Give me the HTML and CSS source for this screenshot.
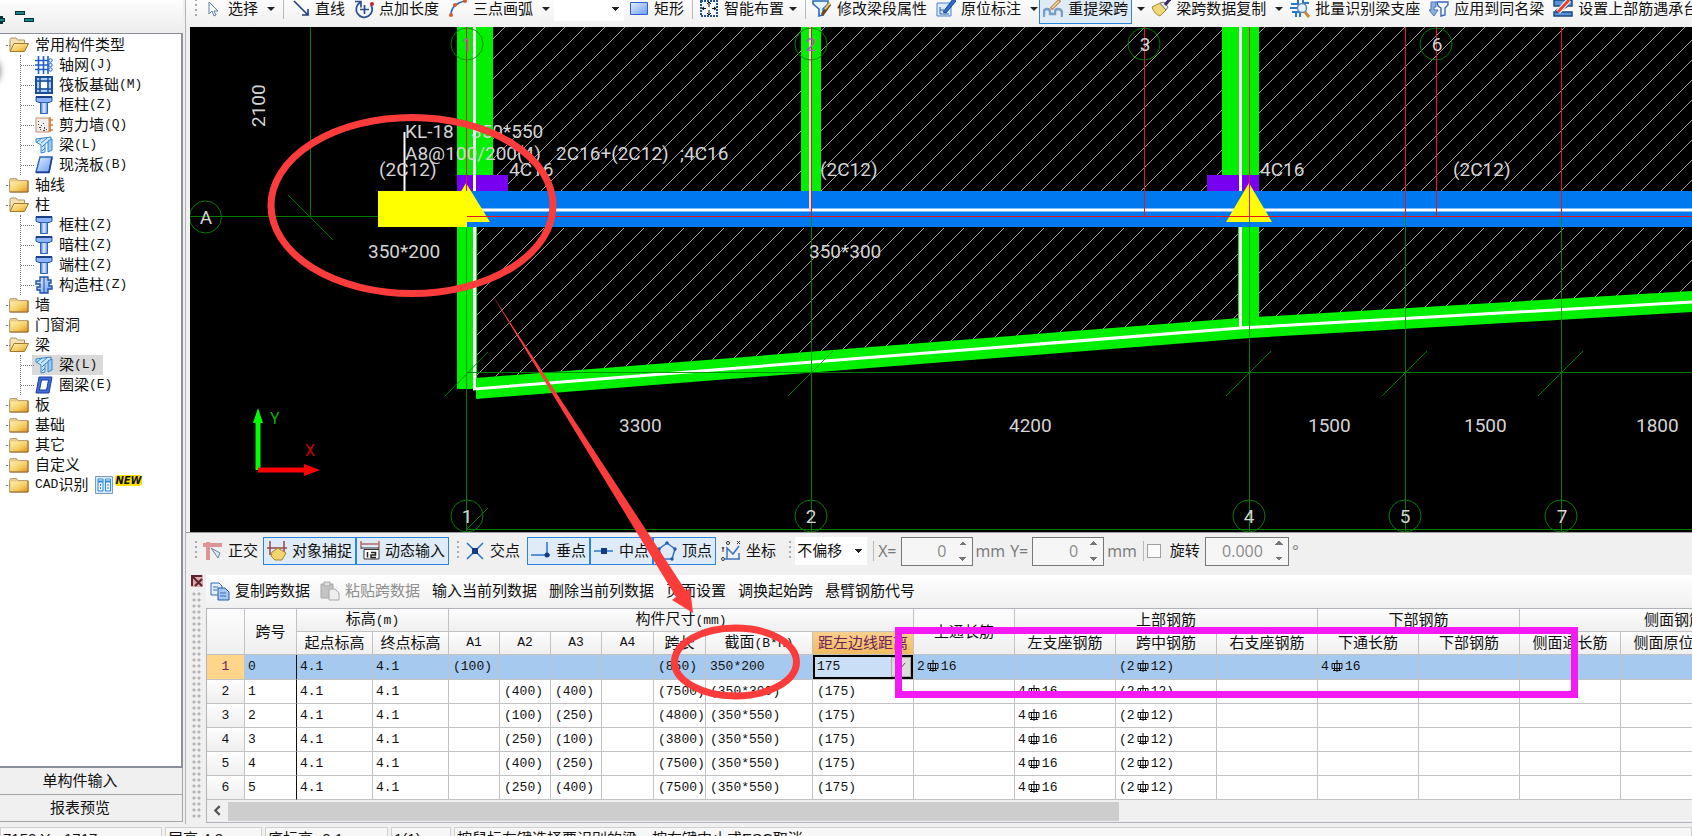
FILE: index.html
```html
<!DOCTYPE html>
<html lang="zh-CN">
<head>
<meta charset="utf-8">
<title>梁平法表格</title>
<link rel="stylesheet" href="styles.css">
</head>
<body>
<svg class="defs" aria-hidden="true">
  <defs>
    <linearGradient id="gFold" x1="0" y1="0" x2="1" y2="1"><stop offset="0" stop-color="#fff3b0"/><stop offset=".6" stop-color="#f3cb60"/><stop offset="1" stop-color="#e8901c"/></linearGradient>
    <linearGradient id="gBlue" x1="0" y1="0" x2="1" y2="1"><stop offset="0" stop-color="#e6f0ff"/><stop offset="1" stop-color="#6a9cf0"/></linearGradient>
    <linearGradient id="gCol" x1="0" y1="0" x2="1" y2="0"><stop offset="0" stop-color="#3a72d8"/><stop offset=".5" stop-color="#e8f1ff"/><stop offset="1" stop-color="#5588e0"/></linearGradient>
  </defs>
  <symbol id="folder" viewBox="0 0 20 16"><path d="M.5 3.500l1-2h6l1.500 2h10v11.500H.5z" fill="#e9c98a" stroke="#b9a070"/><path d="M1.500 4.500h17v10h-17z" fill="url(#gFold)"/><path d="M1 15h18V4" fill="none" stroke="#8a6420"/></symbol>
  <symbol id="folder-open" viewBox="0 0 20 16"><path d="M1 14V2.500l1-1.500h5l1.500 2h7V6" fill="#f5e2b0" stroke="#a89468"/><path d="M1 14.500L5 6.500h14.500l-4 8z" fill="url(#gFold)" stroke="#a07830"/></symbol>
  <symbol id="grid" viewBox="0 0 18 18"><path d="M3.500 0v18M8.500 0v18M13 0v18M0 4.500h15M0 9h15M0 13.500h15" stroke="#1f5fc8" stroke-width="1.600"/><g fill="#fff" stroke="#1f5fc8"><circle cx="15.500" cy="4.500" r="1.700"/><circle cx="15.500" cy="9" r="1.700"/><circle cx="15.500" cy="13.500" r="1.700"/></g></symbol>
  <symbol id="raft" viewBox="0 0 18 18"><path d="M1 1h16v16H1z" fill="#a9cdf2" stroke="#1b4d96" stroke-width="2"/><path d="M5 0v18M13 0v18M0 5h18M0 13h18" stroke="#1b4d96" stroke-width="1.500"/><path d="M6 6h6v6H6z" fill="#fff"/></symbol>
  <symbol id="column" viewBox="0 0 18 18"><path d="M1 .8h16v4.400l-3 1.300H4L1 5.200z" fill="#8db4f2" stroke="#1e4fae"/><path d="M1 1h16" stroke="#1d3f88" stroke-width="2"/><path d="M5.500 6.500h7v11h-7z" fill="url(#gCol)" stroke="#2a60c8"/></symbol>
  <symbol id="wall" viewBox="0 0 18 18"><path d="M1 2h13v14H1z" fill="#eee" stroke="#c98a68"/><path d="M3 5h1v1H3zM6 9h1v1H6zM4 11h2v1H4zM9 11h1v2H9zM5 13h1v1H5zM8 14h2v1H8zM11 13h1v1h-1zM3 8h1v1H3zM8 7h1v1H8z" fill="#444"/><path d="M15 1v15M14 4h4M14 9h4M14 14h4" stroke="#e07a30" stroke-width="1.600"/></symbol>
  <symbol id="beam" viewBox="0 0 18 18"><path d="M1 3L16 1v3l-6 4v8l-4 1V9L1 6z" fill="#cfe6ff" stroke="#2e86d0"/><path d="M13 5l4-2v11l-4 2z" fill="#9cc8f4" stroke="#2e86d0"/><path d="M2 6l5-4M6 7l6-5M7 11l3-3M7 15l3-3" stroke="#2e86d0"/></symbol>
  <symbol id="slab" viewBox="0 0 18 18"><path d="M5 1h12l-3 15H1z" fill="url(#gBlue)" stroke="#2b5fc0" stroke-width="1.400"/><path d="M1 16.500h13l3-15" fill="none" stroke="#1c3f98" stroke-width="1.500"/></symbol>
  <symbol id="ring" viewBox="0 0 18 18"><path d="M4 1h13l-3 16H1z" fill="#3c6fd6" stroke="#1c3f98"/><path d="M6.500 4h7l-2 10H4.500z" fill="#fff" stroke="#1c3f98"/></symbol>
  <symbol id="tie" viewBox="0 0 18 18"><path d="M5 1h8v3h3v3h-2v3h3v3h-4v4H5v-3H2v-3h3V8H1V5h4z" fill="url(#gBlue)" stroke="#1e4fae" stroke-width="1.400"/><path d="M9 1v16" stroke="#1e4fae"/></symbol>
  <symbol id="cad" viewBox="0 0 18 18"><path d="M.5.5h17v17H.5z" fill="#d8ecff" stroke="#7f9ab4"/><path d="M3 3h5v12H3zM10.500 3h5v12h-5z" fill="#eaf5ff" stroke="#2f8ae0"/><path d="M3 5.500h5M10.500 5.500h5" stroke="#2f8ae0" stroke-width="2"/><path d="M5.500 8v6M13 8v6" stroke="#2f8ae0" stroke-dasharray="2 1"/></symbol>
  <symbol id="rebar" viewBox="0 0 12 12"><path d="M1 3.500h10v5H1zM6 0v12M3.500 3.500v7M8.500 3.500v7M2 10.500h8" fill="none" stroke="#111"/></symbol>
</svg>

<div class="workspace">
  <aside class="sidebar">
    <div class="tree-tools">
      <svg width="36" height="20" viewBox="0 0 36 20" aria-label="展开 折叠"><path d="M0 11h5M1 7v8M15 4h10M24 11h10" stroke="#0a3234" stroke-width="4"/><path d="M0 11h4M16 4h8M25 11h8" stroke="#17868a" stroke-width="2"/></svg>
    </div>
    <nav class="tree">
      <div class="blob"></div>
      <ul>
        <li class="row open"><svg class="fi"><use href="#folder-open"/></svg>常用构件类型</li>
        <li><ul class="kids">
          <li class="row"><svg class="ci"><use href="#grid"/></svg>轴网<span class="key">(J)</span></li>
          <li class="row"><svg class="ci"><use href="#raft"/></svg>筏板基础<span class="key">(M)</span></li>
          <li class="row"><svg class="ci"><use href="#column"/></svg>框柱<span class="key">(Z)</span></li>
          <li class="row"><svg class="ci"><use href="#wall"/></svg>剪力墙<span class="key">(Q)</span></li>
          <li class="row"><svg class="ci"><use href="#beam"/></svg>梁<span class="key">(L)</span></li>
          <li class="row"><svg class="ci"><use href="#slab"/></svg>现浇板<span class="key">(B)</span></li>
        </ul></li>
        <li class="row"><svg class="fi"><use href="#folder"/></svg>轴线</li>
        <li class="row open"><svg class="fi"><use href="#folder-open"/></svg>柱</li>
        <li><ul class="kids">
          <li class="row"><svg class="ci"><use href="#column"/></svg>框柱<span class="key">(Z)</span></li>
          <li class="row"><svg class="ci"><use href="#column"/></svg>暗柱<span class="key">(Z)</span></li>
          <li class="row"><svg class="ci"><use href="#column"/></svg>端柱<span class="key">(Z)</span></li>
          <li class="row"><svg class="ci"><use href="#tie"/></svg>构造柱<span class="key">(Z)</span></li>
        </ul></li>
        <li class="row"><svg class="fi"><use href="#folder"/></svg>墙</li>
        <li class="row"><svg class="fi"><use href="#folder"/></svg>门窗洞</li>
        <li class="row open"><svg class="fi"><use href="#folder-open"/></svg>梁</li>
        <li><ul class="kids">
          <li class="row"><span class="picked"><svg class="ci"><use href="#beam"/></svg>梁<span class="key">(L)</span></span></li>
          <li class="row"><svg class="ci"><use href="#ring"/></svg>圈梁<span class="key">(E)</span></li>
        </ul></li>
        <li class="row"><svg class="fi"><use href="#folder"/></svg>板</li>
        <li class="row"><svg class="fi"><use href="#folder"/></svg>基础</li>
        <li class="row"><svg class="fi"><use href="#folder"/></svg>其它</li>
        <li class="row"><svg class="fi"><use href="#folder"/></svg>自定义</li>
        <li class="row"><svg class="fi"><use href="#folder"/></svg><span class="key">CAD</span>识别<svg class="ci cadi"><use href="#cad"/></svg><b class="new">NEW</b></li>
      </ul>
    </nav>
    <button class="side-btn">单构件输入</button>
    <button class="side-btn">报表预览</button>
  </aside>

  <main class="main">
    <div class="bar top-bar">
      <i class="grip"></i>
      <button class="tool"><svg viewBox="0 0 20 20"><path d="M6 3v12l3-3 2 5 2-1-2-4h4z" fill="#fff" stroke="#5c7fa8"/></svg>选择</button><i class="caret"></i>
      <i class="sep"></i>
      <button class="tool"><svg viewBox="0 0 20 20"><path d="M4 2L18 16M18 10v6h-6" fill="none" stroke="#1f3f80" stroke-width="1.600"/></svg>直线</button>
      <button class="tool"><svg viewBox="0 0 20 20"><path d="M6 3.500a8 8 0 1 0 11 2.500M10.500 6v9M6 10.500h9M1 2.500h6v6" fill="none" stroke="#28508c" stroke-width="1.700"/><circle cx="18" cy="5" r="2" fill="#c23"/></svg>点加长度</button>
      <button class="tool"><svg viewBox="0 0 20 20"><path d="M3 16Q3 5 17 2" fill="none" stroke="#2f62b0" stroke-width="1.600"/><g fill="#e0582c"><circle cx="3" cy="16" r="2"/><circle cx="7" cy="6" r="2"/><circle cx="17" cy="2" r="2"/></g></svg>三点画弧</button><i class="caret"></i>
      <select class="blank" aria-label="画弧方式"><option></option></select>
      <button class="tool"><svg viewBox="0 0 20 20"><path d="M1.500 3.500h17v12h-17z" fill="url(#gBlue)" stroke="#2c5fd0"/></svg>矩形</button>
      <i class="sep"></i>
      <button class="tool"><svg viewBox="0 0 20 20"><path d="M2 2h16v15H2z" fill="#f3f8ff" stroke="#24508a" stroke-dasharray="2 1" stroke-width="2"/><path d="M10 3v5M8 5l2-2 2 2M10 16v-5M8 14l2 2 2-2M3 9.500h4M5 8L3 9.500 5 11M17 9.500h-4M15 8l2 1.500-2 1.500" stroke="#111" fill="none"/></svg>智能布置</button><i class="caret tight"></i>
      <i class="sep"></i>
      <button class="tool"><svg viewBox="0 0 20 20"><path d="M1 2h15v3l-5 5v6l-4 1v-7L1 5z" fill="#e8f3ff" stroke="#2868c0" stroke-width="1.600"/><path d="M10 16L18 5" stroke="#6a4a18" stroke-width="3"/><path d="M13 10l5-6" stroke="#e8c060" stroke-width="2"/></svg>修改梁段属性</button>
      <button class="tool"><svg viewBox="0 0 20 20"><path d="M1 4h14v13H1z" fill="#dcebfb" stroke="#4a80c8"/><path d="M4 15V8M4 15h9M4 11h4" stroke="#2d62b0"/><path d="M7 13L17 0l3 2L10 14z" fill="#2c6ccc" stroke="#174a98"/></svg>原位标注</button><i class="caret"></i>
      <button class="tool on"><svg viewBox="0 0 20 20"><path d="M1 18v-5q0-3 3-3t3 3v2h5v-2q0-3 3-3t4 3v5" fill="none" stroke="#7c9cc8" stroke-width="2.400"/><path d="M8 10L17 1" stroke="#b98a50" stroke-width="3.500"/><path d="M9 9l7-7" stroke="#f2d8a0" stroke-width="1.500"/></svg>重提梁跨</button><i class="caret tight"></i>
      <button class="tool"><svg viewBox="0 0 20 20"><path d="M1 8l8-4 6 7-6 6q-6-2-8-9z" fill="#f0d878" stroke="#a88a30"/><path d="M9 4l6 7 2-3-4-5z" fill="#eee" stroke="#777"/><path d="M14 6l5-6" stroke="#3a2a6a" stroke-width="3"/></svg>梁跨数据复制</button><i class="caret"></i>
      <button class="tool"><svg viewBox="0 0 20 20"><path d="M1 5h8M0 9h7M2 13h8M8 1v5M13 1v4M6 12v6M10 14v4M14 4h5" stroke="#2a78c8" stroke-width="2"/><circle cx="12" cy="9" r="4.500" fill="#e6f2ff" stroke="#5a88b8" stroke-width="1.500"/><path d="M15 13l4 5" stroke="#d08a28" stroke-width="3"/></svg>批量识别梁支座</button>
      <button class="tool"><svg viewBox="0 0 20 20"><path d="M8 3h11v3l-3 3v7l-4 1V9L9 7z" fill="#f2f8ff" stroke="#3a68b8" stroke-width="1.400"/><path d="M2 3h5v5H5v3h4l-4 6-5-6h2z" fill="#8cb0e8" stroke="#4a70b8"/></svg>应用到同名梁</button>
      <button class="tool"><svg viewBox="0 0 20 20"><path d="M1 1h18v6H1zM1 13h18v4H1z" fill="#5a94d4" stroke="#174a88" stroke-width="1.500"/><path d="M3 13L14 6" stroke="#174a88" stroke-width="4"/><path d="M5 13L16 1" stroke="#fff" stroke-width="5"/><path d="M5 13L16 1" stroke="#e8442c" stroke-width="3"/></svg>设置上部筋遇承台</button>
    </div>

    <section class="canvas">
      <svg viewBox="190 27 1502 505" preserveAspectRatio="xMinYMin slice" aria-label="梁平面图">
        <defs><pattern id="hatch" width="20" height="20" patternUnits="userSpaceOnUse"><path d="M-1 13L13-1M11 21L21 11" stroke="#a0a0a0"/></pattern></defs>
        <path d="M493 27H1692V191H493zM477 228H1692V292L1260 317 477 378z" fill="url(#hatch)"/>
        <g fill="#00f000">
          <path d="M457 27h36v164h-36zM457 227h20v162h-20zM801 27h20v164h-20zM1222 27h37v164h-37zM1238 227h21v100h-21z"/>
          <path d="M476 378L1240 318 1692 291v21L1250 338 476 399z"/>
        </g>
        <path d="M457 175h51v16h-51zM1207 175h52v16h-52z" fill="#7800f0"/>
        <path d="M474.500 27V389L1240.500 328 1692 302M1240.500 27V328" fill="none" stroke="#fff" stroke-width="3"/>
        <path d="M467 191H1692v36H467z" fill="#0078f0"/>
        <path d="M480 210H1692" stroke="#fff" stroke-width="3"/>
        <path d="M810 27V210" stroke="#ddd" stroke-width="2"/>
        <path d="M378 191H467v36H378zM466 183l24 39h-47zM1249 183l23 39h-46z" fill="#ff0"/>
        <path d="M404.500 132V191" stroke="#fff" stroke-width="2"/>
        <g fill="none" stroke="#080" stroke-width="1" opacity=".9">
          <path d="M310.500 27V216.500M190 216.500H378M288 195l45 45M466.500 228V531M811.500 216V531M1249.500 216V531M1405.500 216V531M1561.500 216V531M467 372.500H1692M467 529.500H1692M445 396l43-44M788 396l45-45M1226 396l45-45M1382 396l45-45M1538 396l45-45M467 529l21-21"/>
          <circle cx="205.500" cy="217" r="16"/><circle cx="467" cy="44" r="16"/><circle cx="811" cy="44" r="16"/><circle cx="1144" cy="44" r="16"/><circle cx="1436" cy="44" r="16"/>
          <circle cx="467" cy="516" r="16"/><circle cx="811" cy="516" r="16"/><circle cx="1249" cy="516" r="16"/><circle cx="1405" cy="516" r="16"/><circle cx="1561" cy="516" r="16"/>
        </g>
        <path d="M466.500 27V191M467 216.500H1692M811.500 27V216M1144.500 27V216M1249.500 27V216M1405.500 27V216M1436.500 27V216M1561.500 27V216" stroke="#e8141c" stroke-width="1"/>
        <g class="cad-text">
          <text x="368" y="258">350*200</text><text x="809" y="258">350*300</text>
          <text x="379" y="176">(2C12)</text><text x="509" y="176">4C16</text><text x="820" y="176">(2C12)</text>
          <text x="1260" y="176">4C16</text><text x="1453" y="176">(2C12)</text>
          <text x="405" y="138">KL-18</text><text x="471" y="138">350*550</text>
          <text x="405" y="160">A8@100/200(4)</text><text x="556" y="160">2C16+(2C12)</text><text x="680" y="160">;4C16</text>
          <text x="619" y="432">3300</text><text x="1009" y="432">4200</text><text x="1308" y="432">1500</text><text x="1464" y="432">1500</text><text x="1636" y="432">1800</text>
          <text transform="translate(265 127) rotate(-90)">2100</text>
          <g text-anchor="middle">
            <text x="206" y="224">A</text><text x="467" y="51" fill="#b060b0">1</text><text x="811" y="51" fill="#b060b0">2</text><text x="1145" y="51">3</text><text x="1437" y="51">6</text>
            <text x="467" y="523">1</text><text x="811" y="523">2</text><text x="1249" y="523">4</text><text x="1405" y="523">5</text><text x="1562" y="523">7</text>
          </g>
        </g>
        <path d="M258 470V421" stroke="#0f0" stroke-width="5"/><path d="M258 408l5 15h-10z" fill="#0f0"/>
        <path d="M258 470H306" stroke="#f00" stroke-width="5"/><path d="M320 470l-16-6v12z" fill="#f00"/>
        <text class="axis" x="270" y="424" fill="#00b000">Y</text><text class="axis" x="305" y="456" fill="#c00000">X</text>
      </svg>
    </section>

    <div class="bar snap-bar">
      <i class="grip"></i>
      <button class="tool"><svg viewBox="0 0 20 20"><path d="M0 4h19M5 1v18" stroke="#dc9494" stroke-width="4"/><path d="M8 7l9 5-2 5z" fill="#dde8f2" stroke="#6c8098"/></svg>正交</button>
      <div class="group">
        <button class="tool on"><svg viewBox="0 0 20 20"><path d="M3 0v14M17 0v14M0 7h20" stroke="#984848" stroke-width="1.500"/><path d="M5 11l6-4 8 5-4 7H8l-4-4z" fill="#f2d470" stroke="#a88430"/></svg>对象捕捉</button><button class="tool on"><svg viewBox="0 0 20 20"><path d="M1 0v8M19 0v8M1 3h18" stroke="#b46c6c" stroke-width="1.500"/><path d="M1 7h18M4 8.500h15V18H4z" fill="#fff" stroke="#333"/><path d="M7.500 11v5.500M11 11.500h4.500v2.500H11v2.500h5" fill="none" stroke="#222" stroke-width="1.500"/></svg>动态输入</button>
      </div>
      <i class="grip"></i>
      <button class="tool"><svg viewBox="0 0 20 20"><path d="M2 2l16 16M18 2L2 18" stroke="#2f74c8" stroke-width="1.600"/><path d="M7 7h6v6H7z" fill="#123c88"/></svg>交点</button>
      <div class="group second">
        <button class="tool on"><svg viewBox="0 0 20 20"><path d="M0 14h19M16 1v15" stroke="#2f74c8" stroke-width="1.500"/><circle cx="16" cy="14" r="2.500" fill="#123c88"/></svg>垂点</button><button class="tool on"><svg viewBox="0 0 20 20"><path d="M0 10h19" stroke="#2f74c8" stroke-width="1.500"/><path d="M7 7h6v6H7z" fill="#123c88"/></svg>中点</button><button class="tool on"><svg viewBox="0 0 20 20"><path d="M10 2l8 6-3 10H5L2 8z" fill="none" stroke="#2f74c8" stroke-width="1.500"/><g fill="#2458b0"><circle cx="10" cy="2" r="1.700"/><circle cx="18" cy="8" r="1.700"/><circle cx="15" cy="18" r="1.700"/><circle cx="5" cy="18" r="1.700"/><circle cx="2" cy="8" r="1.700"/></g></svg>顶点</button>
      </div>
      <button class="tool coord"><svg viewBox="0 0 20 20"><path d="M6 18V7l6 6 6-8M4 18h15M18 12v6" fill="none" stroke="#3c74c0" stroke-width="1.500"/><path d="M1 6l1 2 1-2M2 8v3" stroke="#333" fill="none"/><circle cx="7" cy="2" r="1.500" fill="none" stroke="#333"/><circle cx="2" cy="18" r="1.500" fill="none" stroke="#333"/><path d="M16 0l3 3M19 0l-3 3" stroke="#333"/></svg>坐标</button>
      <i class="grip"></i>
      <select class="offset" aria-label="偏移方式"><option>不偏移</option></select>
      <i class="sep"></i>
      <label class="unit" for="dx">X=</label><span class="spin"><input id="dx" value="0" disabled><i></i></span><span class="unit">mm</span>
      <label class="unit y" for="dy">Y=</label><span class="spin"><input id="dy" value="0" disabled><i></i></span><span class="unit">mm</span>
      <i class="sep"></i>
      <label class="rot"><input type="checkbox">旋转</label><span class="spin wide"><input aria-label="旋转角度" value="0.000" disabled><i></i></span><span class="unit deg">°</span>
    </div>

    <section class="pane">
      <div class="pane-grip"><button class="close" aria-label="关闭"><svg viewBox="0 0 12 12"><path d="M1 11V1h10M1 1l10 10M11 4L4 11" fill="none" stroke="#5a2430" stroke-width="2"/></svg></button></div>
      <div class="pane-body">
        <div class="pane-bar">
          <button class="tool"><svg viewBox="0 0 20 20"><path d="M1 2h8l3 3v9H1z" fill="#e4f0ff" stroke="#3468b8"/><path d="M8 7h7l4 4v8H8z" fill="#a8c8f4" stroke="#2458a8"/><path d="M3 6h5M3 9h4M10 12h6M10 15h6" stroke="#3468b8"/></svg>复制跨数据</button>
          <button class="tool" disabled><svg viewBox="0 0 20 20"><path d="M1 3h12v14H1z" fill="#c4c4c4" stroke="#a8a8a8"/><path d="M4 1h6v4H4z" fill="#ddd" stroke="#aaa"/><path d="M9 8h6l4 4v7H9z" fill="#eee" stroke="#a8a8a8"/></svg>粘贴跨数据</button>
          <button>输入当前列数据</button>
          <button>删除当前列数据</button>
          <button>页面设置</button>
          <button>调换起始跨</button>
          <button>悬臂钢筋代号</button>
        </div>
        <div class="sheet">
          <table>
            <colgroup><col class="w38"><col class="w52"><col class="w76"><col class="w76"><col class="w51"><col class="w51"><col class="w51"><col class="w52"><col class="w52"><col class="w107"><col class="w101"><col class="w101"><col class="w101"><col class="w101"><col class="w101"><col class="w101"><col class="w101"><col class="w101"><col class="w101"><col class="w107"></colgroup>
            <thead>
              <tr><th rowspan="2"></th><th rowspan="2">跨号</th><th colspan="2">标高<span class="key">(m)</span></th><th colspan="7">构件尺寸<span class="key">(mm)</span></th><th rowspan="2">上通长筋</th><th colspan="3">上部钢筋</th><th colspan="2">下部钢筋</th><th colspan="3">侧面钢筋</th></tr>
              <tr><th>起点标高</th><th>终点标高</th><th class="key">A1</th><th class="key">A2</th><th class="key">A3</th><th class="key">A4</th><th>跨长</th><th>截面<span class="key">(B*H)</span></th><th class="hot">距左边线距离</th><th>左支座钢筋</th><th>跨中钢筋</th><th>右支座钢筋</th><th>下通长筋</th><th>下部钢筋</th><th>侧面通长筋</th><th>侧面原位标</th><th>拉筋</th></tr>
            </thead>
            <tbody>
              <tr class="sel"><th>1</th><td>0</td><td>4.1</td><td>4.1</td><td>(100)</td><td></td><td></td><td></td><td>(850)</td><td>350*200</td><td class="edit"><div class="editor"><input value="175" aria-label="距左边线距离"><button aria-label="展开"><svg viewBox="0 0 10 10"><path d="M1 5l3 3 5-6" fill="none" stroke="#555"/></svg></button></div></td><td>2<svg class="rb"><use href="#rebar"/></svg>16</td><td></td><td>(2<svg class="rb"><use href="#rebar"/></svg>12)</td><td></td><td>4<svg class="rb"><use href="#rebar"/></svg>16</td><td></td><td></td><td></td><td></td></tr>
              <tr><th>2</th><td>1</td><td>4.1</td><td>4.1</td><td></td><td>(400)</td><td>(400)</td><td></td><td>(7500)</td><td>(350*300)</td><td>(175)</td><td></td><td>4<svg class="rb"><use href="#rebar"/></svg>16</td><td>(2<svg class="rb"><use href="#rebar"/></svg>12)</td><td></td><td></td><td></td><td></td><td></td><td></td></tr>
              <tr><th>3</th><td>2</td><td>4.1</td><td>4.1</td><td></td><td>(100)</td><td>(250)</td><td></td><td>(4800)</td><td>(350*550)</td><td>(175)</td><td></td><td>4<svg class="rb"><use href="#rebar"/></svg>16</td><td>(2<svg class="rb"><use href="#rebar"/></svg>12)</td><td></td><td></td><td></td><td></td><td></td><td></td></tr>
              <tr><th>4</th><td>3</td><td>4.1</td><td>4.1</td><td></td><td>(250)</td><td>(100)</td><td></td><td>(3800)</td><td>(350*550)</td><td>(175)</td><td></td><td>4<svg class="rb"><use href="#rebar"/></svg>16</td><td>(2<svg class="rb"><use href="#rebar"/></svg>12)</td><td></td><td></td><td></td><td></td><td></td><td></td></tr>
              <tr><th>5</th><td>4</td><td>4.1</td><td>4.1</td><td></td><td>(400)</td><td>(250)</td><td></td><td>(7500)</td><td>(350*550)</td><td>(175)</td><td></td><td>4<svg class="rb"><use href="#rebar"/></svg>16</td><td>(2<svg class="rb"><use href="#rebar"/></svg>12)</td><td></td><td></td><td></td><td></td><td></td><td></td></tr>
              <tr><th>6</th><td>5</td><td>4.1</td><td>4.1</td><td></td><td>(250)</td><td>(400)</td><td></td><td>(7500)</td><td>(350*550)</td><td>(175)</td><td></td><td>4<svg class="rb"><use href="#rebar"/></svg>16</td><td>(2<svg class="rb"><use href="#rebar"/></svg>12)</td><td></td><td></td><td></td><td></td><td></td><td></td></tr>
            </tbody>
          </table>
          <div class="hscroll"><button aria-label="向左滚动"><svg viewBox="0 0 10 10"><path d="M7 1L3 5l4 4" fill="none" stroke="#555" stroke-width="2"/></svg></button><i class="thumb"></i></div>
        </div>
      </div>
    </section>
  </main>
</div>

<footer class="status">
  <span class="s1">7150 Y=-1717</span><span class="s2">层高:4.2</span><span class="s3">底标高:-0.1</span><span class="s4">1(1)</span><span class="s5">按鼠标左键选择要识别的梁，按右键中止或ESC取消</span>
</footer>

<svg class="markup" viewBox="0 0 1692 836" preserveAspectRatio="xMinYMin slice" aria-hidden="true">
  <g fill="none" stroke="#fc3b3b" stroke-width="7"><ellipse cx="412" cy="205.500" rx="141" ry="88"/><ellipse cx="735.500" cy="662" rx="61" ry="34"/></g>
  <path d="M491 293L686 591 690 588 693 613 672 600 676 597z" fill="#fc3b3b"/>
  <path d="M898.500 630.500H1574.500V694.500H898.500z" fill="none" stroke="#f41af4" stroke-width="7"/>
</svg>
</body>
</html>
```
FILE: styles.css
```css
* { box-sizing: border-box; }
body {
  margin: 0;
  height: 100vh;
  display: flex;
  flex-direction: column;
  overflow: hidden;
  position: relative;
  background: #f0f0f0;
  color: #111;
  font: 15px/20px "Liberation Sans", "Noto Sans CJK SC", sans-serif;
}
.defs { position: absolute; width: 0; height: 0; }
button {
  border: 0;
  padding: 0;
  background: none;
  color: inherit;
  font: inherit;
  white-space: nowrap;
}
.key { font-family: "Liberation Mono", "Noto Sans CJK SC", monospace; font-size: 13px; }

.workspace { flex: 1; min-height: 0; display: flex; }

/* component tree */
.sidebar {
  flex: none;
  width: 183px;
  display: flex;
  flex-direction: column;
  padding-bottom: 2px;
}
.tree-tools {
  height: 33px;
  padding-top: 9px;
  background: linear-gradient(#fdfdfd, #ececec);
}
.tree-tools svg { display: block; }
.tree {
  flex: 1;
  min-height: 0;
  position: relative;
  overflow: hidden;
  padding-top: 1px;
  background: #fff;
  border: solid #8a8f99;
  border-width: 1px 2px 2px 0;
}
.blob {
  position: absolute;
  left: -34px;
  top: 20px;
  width: 34px;
  height: 34px;
  border-radius: 50%;
  box-shadow: 0 0 6px #777;
}
.tree ul { list-style: none; margin: 0; padding: 0; }
.row { display: flex; align-items: center; height: 20px; padding-left: 9px; position: relative; }
.row::before {
  content: "";
  position: absolute;
  left: 6px;
  top: 10px;
  width: 4px;
  border-top: 1px dotted #777;
}
.tree .kids { margin-left: 20px; border-left: 1px dotted #777; }
.kids .row { padding-left: 14px; }
.kids .row::before { left: 0; width: 13px; }
.fi { width: 20px; height: 16px; margin-right: 6px; }
.ci { width: 18px; height: 18px; margin-right: 6px; }
.cadi { margin: 0 2px 0 7px; }
.new {
  align-self: flex-start;
  background: #fbe000;
  border-radius: 3px;
  font: bold italic 10px/11px "DejaVu Sans", sans-serif;
}
.picked { display: flex; align-items: center; height: 20px; margin-left: -3px; padding: 0 6px 0 3px; background: #d9d9d9; }
.side-btn {
  height: 27px;
  padding-right: 22px;
  background: #f0f0f0;
  border: solid #a5a5a5;
  border-width: 0 1px 1px 0;
  color: #111;
}

/* toolbars */
.main {
  flex: 1;
  min-width: 0;
  display: flex;
  flex-direction: column;
  border-left: 1px solid #b4b4b4;
  margin-left: 2px;
}
.bar { flex: none; display: flex; align-items: center; overflow: hidden; padding-left: 9px; }
.top-bar { height: 27px; padding-bottom: 9px; background: linear-gradient(#fcfcfc, #f0f0f0); }
.bar > * { flex: none; }
.grip { width: 2px; height: 20px; background: repeating-linear-gradient(#aaa 0 2px, transparent 2px 5px); }
.tool { display: flex; align-items: center; gap: 5px; margin-left: 9px; }
.tool svg { width: 20px; height: 20px; flex: none; }
.grip + .tool, .sep + .tool { margin-left: 6px; }
.caret {
  margin-left: 9px;
  border: solid transparent;
  border-width: 4px 4px 0;
  border-top-color: #222;
}
.caret.tight { margin-left: 5px; }
.caret + .tool { margin-left: 7px; }
.sep { width: 1px; height: 20px; margin-left: 8px; background: #b8b8b8; }
.tool.on { height: 28px; padding: 0 3px; background: #dfebf6; border: 1px solid #2a86dc; }
.top-bar .caret + .on { margin-left: 1px; height: 30px; }
.top-bar .on + .caret + .tool { margin-left: 6px; }
select {
  appearance: none;
  border: 0;
  border-radius: 0;
  color: #111;
  font: inherit;
  background:
    linear-gradient(to bottom left, #222 50%, transparent 50%) right 8px center / 4px 4px no-repeat,
    linear-gradient(to bottom right, #222 50%, transparent 50%) right 4px center / 4px 4px no-repeat,
    #fff;
}
.blank { width: 70px; height: 24px; margin-left: 4px; }
.blank + .tool { margin-left: 5px; }

/* drawing */
.canvas { flex: 1; min-height: 0; margin-left: 4px; background: #000; overflow: hidden; }
.canvas svg { display: block; width: 100%; height: 100%; }
.cad-text { font: 19px Roboto, sans-serif; fill: #d4d4d4; }
.axis { font: 16px Roboto, sans-serif; }

/* snap bar */
.snap-bar { height: 43px; padding-bottom: 6px; border-top: 1px solid #999; }
.group { display: flex; margin-left: 5px; }
.group.second { margin-left: 7px; }
.group .tool { margin-left: 0; }
.group + .grip { margin-left: 8px; }
.coord { margin-left: 5px; }
.coord + .grip { margin-left: 13px; }
.offset { width: 72px; height: 28px; margin-left: 4px; padding: 0 2px; }
.snap-bar .sep { margin-left: 6px; }
.unit { margin: 0 4px; color: #777; font: 16px/20px "Open Sans", sans-serif; }
.spin + .unit { margin: 0 0 0 3px; }
.unit.y { margin-left: 5px; }
.spin {
  display: flex;
  align-items: center;
  width: 72px;
  height: 29px;
  padding-right: 5px;
  background: #f6f6f6;
  border: 1px solid #777;
}
.spin.wide { width: 84px; margin-left: 5px; }
.spin input {
  flex: 1;
  min-width: 0;
  border: 0;
  padding: 0 12px 0 0;
  background: none;
  color: #8a8a8a;
  text-align: right;
  font: 16px/20px "Open Sans", sans-serif;
}
.spin i {
  width: 8px;
  height: 20px;
  background:
    linear-gradient(to bottom left, #777 50%, transparent 50%) left bottom / 4px 4px no-repeat,
    linear-gradient(to bottom right, #777 50%, transparent 50%) right bottom / 4px 4px no-repeat,
    linear-gradient(to top left, #777 50%, transparent 50%) left top / 4px 4px no-repeat,
    linear-gradient(to top right, #777 50%, transparent 50%) right top / 4px 4px no-repeat;
}
.rot { display: flex; align-items: center; gap: 9px; margin-left: 3px; }
.rot input { appearance: none; width: 14px; height: 14px; margin: 0; border: 1px solid #a0a0a0; background: #fafafa; }
.deg { color: #888; }

/* beam table pane */
.pane { flex: none; display: flex; min-width: 0; height: 249px; }
.pane-grip {
  flex: none;
  width: 20px;
  padding-left: 5px;
}
.pane-grip::after {
  content: "";
  display: block;
  width: 10px;
  height: 228px;
  margin: 5px 0 0 1px;
  background: radial-gradient(circle at 2px 2px, #b4b4b4 1px, transparent 2px) 0 0 / 5px 6px;
}
.close { display: block; width: 12px; height: 12px; background: #dfaaaa; }
.close svg { display: block; }
.pane-body { flex: 1; min-width: 0; }
.pane-bar {
  display: flex;
  align-items: center;
  gap: 12px;
  height: 33px;
  padding: 0 0 2px 4px;
  background: linear-gradient(#fff, #f0f0f0);
}
.pane-bar > * { flex: none; }
.pane-bar .tool { margin-left: 0; }
.pane-bar .tool + .tool { margin-left: -2px; }
.pane-bar button:disabled { color: #8e8e8e; }
.sheet { overflow: hidden; border: 1px solid #b0b4ba; border-width: 1px 0 1px 1px; background: #f0f0f0; }
table { width: 1622px; table-layout: fixed; border-collapse: separate; border-spacing: 0; background: #fff; }
.w38 { width: 38px; } .w51 { width: 51px; } .w52 { width: 52px; } .w76 { width: 76px; }
.w101 { width: 101px; } .w107 { width: 107px; }
th, td { padding: 0; height: 24px; border: solid #c2c2c2; border-width: 0 1px 1px 0; white-space: nowrap; overflow: hidden; line-height: 20px; }
thead th { height: 23px; }
th { font-weight: normal; background: linear-gradient(#fdfdfd, #efefef); }
td, tbody th { font-family: "Liberation Mono", monospace; font-size: 13px; }
td { padding-left: 3px; text-align: left; }
td:nth-child(n+5):nth-child(-n+11) { padding-left: 4px; }
td:nth-child(2) { border-right-color: #111; }
.sel td { background: #a6c9ef; }
.sel th { background: #ffd58a; color: #702060; }
.hot { background: linear-gradient(#f8d08c, #f0bc60); color: #70205c; }
.sel td.edit { padding: 0; }
.editor { display: flex; height: 24px; border: 2px solid #000; background: #cadef6; }
.editor input { flex: 1; min-width: 0; border: 0; padding: 0 2px; background: none; color: #111; font: inherit; }
.editor button { width: 20px; background: #dcdcdc; border: 1px solid #aaa; }
.editor svg { width: 10px; height: 10px; }
.rb { width: 12px; height: 12px; margin: 0 2px; vertical-align: -2px; }
.hscroll { display: flex; align-items: center; height: 22px; }
.hscroll button { width: 21px; height: 20px; }
.hscroll button svg { width: 11px; height: 11px; }
.thumb { width: 60%; height: 19px; background: #cdcdcd; }

/* status line */
.status { flex: none; display: flex; gap: 3px; height: 12px; padding-top: 3px; overflow: hidden; }
.status span { height: 30px; padding: 1px 2px; border: 1px solid #d0d0d0; background: #f7f7f7; white-space: nowrap; }
.s1 { width: 162px; } .s2 { width: 97px; } .s3 { width: 123px; } .s4 { width: 60px; } .s5 { flex: 1; }

.markup { position: absolute; left: 0; top: 0; width: 100%; height: 100%; pointer-events: none; }
```
